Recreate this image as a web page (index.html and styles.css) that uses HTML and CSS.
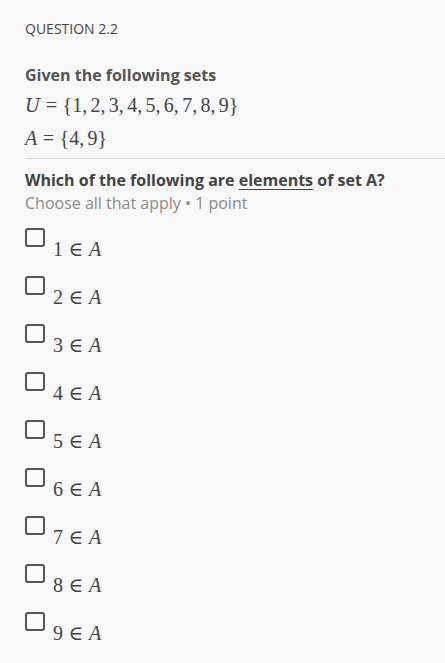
FILE: index.html
```html
<!DOCTYPE html>
<html>
<head>
<meta charset="utf-8">
<link rel="stylesheet" href="styles.css">
</head>
<body>
<div class="page">
  <div class="qnum">QUESTION 2.2</div>
  <div class="intro">
    <div class="lead">Given the following sets</div>
    <div class="math eq first"><span class="cal">U</span><span class="rel">=</span>{1,<span class="th"></span>2,<span class="th"></span>3,<span class="th"></span>4,<span class="th"></span>5,<span class="th"></span>6,<span class="th"></span>7,<span class="th"></span>8,<span class="th"></span>9}</div>
    <div class="math eq"><i>A</i><span class="rel">=</span>{4,<span class="th"></span>9}</div>
  </div>
  <div class="divider"></div>
  <div class="prompt">Which of the following are <u>elements</u> of set A?</div>
  <div class="hint">Choose all that apply • 1 point</div>
  <ul class="options">
    <li class="opt"><span class="box"></span><span class="math lbl">1<span class="rel">∈</span><i>A</i></span></li>
    <li class="opt"><span class="box"></span><span class="math lbl">2<span class="rel">∈</span><i>A</i></span></li>
    <li class="opt"><span class="box"></span><span class="math lbl">3<span class="rel">∈</span><i>A</i></span></li>
    <li class="opt"><span class="box"></span><span class="math lbl">4<span class="rel">∈</span><i>A</i></span></li>
    <li class="opt"><span class="box"></span><span class="math lbl">5<span class="rel">∈</span><i>A</i></span></li>
    <li class="opt"><span class="box"></span><span class="math lbl">6<span class="rel">∈</span><i>A</i></span></li>
    <li class="opt"><span class="box"></span><span class="math lbl">7<span class="rel">∈</span><i>A</i></span></li>
    <li class="opt"><span class="box"></span><span class="math lbl">8<span class="rel">∈</span><i>A</i></span></li>
    <li class="opt"><span class="box"></span><span class="math lbl">9<span class="rel">∈</span><i>A</i></span></li>
  </ul>
</div>
</body>
</html>
```

FILE: styles.css
```css
html, body {
  margin: 0;
  padding: 0;
  background: #f8f8f8;
}
.page {
  padding: 19px 0 0 25px;
  font-family: "Open Sans", sans-serif;
  color: #444;
}
.qnum {
  font-size: 14px;
  line-height: 20px;
  color: #444;
}
.intro {
  margin-top: 25px;
}
.lead {
  font-size: 16px;
  font-weight: bold;
  line-height: 22px;
  color: #555;
}
.math {
  font-family: "Liberation Serif", "DejaVu Serif", serif;
  color: #444;
}
.math i {
  font-style: italic;
}
.rel {
  display: inline-block;
  margin: 0 0.278em;
}
.th {
  display: inline-block;
  width: 0.167em;
}
.eq {
  font-size: 20px;
  line-height: 33px;
}
.eq.first {
  margin-top: 3px;
}
.cal {
  font-style: italic;
  font-family: "DejaVu Serif", serif;
  font-size: 18px;
}
.divider {
  height: 1px;
  background: #dcdcdc;
  margin-top: 3px;
}
.prompt {
  margin-top: 10px;
  font-size: 16px;
  font-weight: bold;
  line-height: 22px;
  color: #444;
}
.prompt u {
  text-underline-offset: 3px;
}
.hint {
  font-size: 16px;
  line-height: 24px;
  color: #8a8a8a;
}
.options {
  list-style: none;
  margin: 13px 0 0;
  padding: 0;
  display: flex;
  flex-direction: column;
}
.opt {
  display: flex;
  align-items: flex-start;
  height: 48px;
}
.box {
  width: 16px;
  height: 15px;
  border: 2px solid #555;
  border-radius: 3px;
  flex: none;
}
.lbl {
  margin-left: 8px;
  margin-top: 11px;
  font-size: 20px;
  line-height: 20px;
  color: #444;
}
```
